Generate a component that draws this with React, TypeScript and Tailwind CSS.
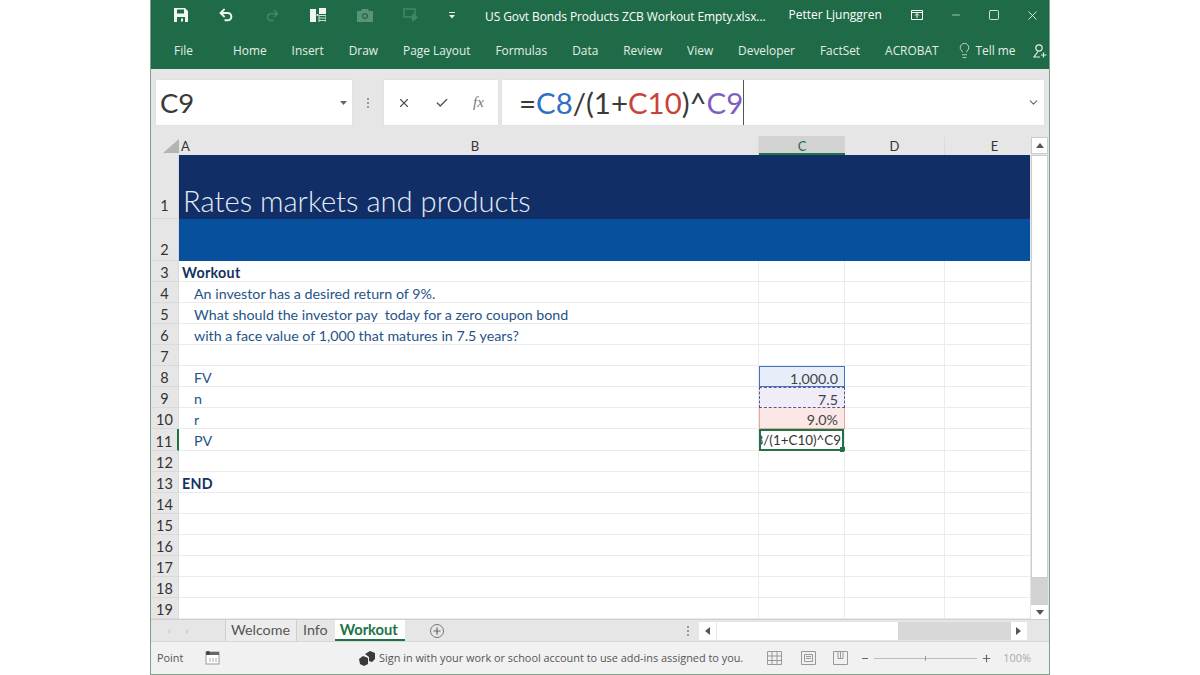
import { Check, ChevronDown, Lightbulb, Plus, Square, Undo2, Redo2, X, Minus } from 'lucide-react';

const ribbonTabs = ['Home', 'Insert', 'Draw', 'Page Layout', 'Formulas', 'Data', 'Review', 'View', 'Developer', 'FactSet', 'ACROBAT'];

type Row = { n: number; h: string; a?: string; indent?: boolean; bold?: boolean; c?: string; cell?: string };

const rows: Row[] = [
    { n: 3, h: 'h-[21px]', a: 'Workout', bold: true },
    { n: 4, h: 'h-[21px]', a: 'An investor has a desired return of 9%.', indent: true },
    { n: 5, h: 'h-[21px]', a: 'What should the investor pay  today for a zero coupon bond', indent: true },
    { n: 6, h: 'h-[21px]', a: 'with a face value of 1,000 that matures in 7.5 years?', indent: true },
    { n: 7, h: 'h-[21px]' },
    { n: 8, h: 'h-[21px]', a: 'FV', indent: true, c: '1,000.0', cell: 'bg-[#e7eefa] border border-[#4472c4]' },
    { n: 9, h: 'h-[21px]', a: 'n', indent: true, c: '7.5', cell: 'bg-[#f1edf8] border border-dashed border-[#5b5b8a]' },
    { n: 10, h: 'h-[21px]', a: 'r', indent: true, c: '9.0%', cell: 'bg-[#fbe8e6] border-x border-b border-[#e0a8a0]' },
    { n: 11, h: 'h-[22px]', a: 'PV', indent: true },
    { n: 12, h: 'h-[21px]' },
    { n: 13, h: 'h-[21px]', a: 'END', bold: true },
    { n: 14, h: 'h-[21px]' },
    { n: 15, h: 'h-[21px]' },
    { n: 16, h: 'h-[21px]' },
    { n: 17, h: 'h-[21px]' },
    { n: 18, h: 'h-[21px]' },
    { n: 19, h: 'h-[21px]' },
];

const RowHead = ({ n, active, pad = '' }: { n: number; active?: boolean; pad?: string }) => (
    <div className={`w-[28px] shrink-0 flex items-end justify-center text-[14.5px] leading-[17px] text-[#333] bg-[#e6e6e6] border-b border-[#dadada] ${pad} ${active ? 'border-r-2 border-r-[#217346]' : 'border-r border-r-[#dadada]'}`}>
        {n}
    </div>
);

const Dots = () => (
    <div className="flex flex-col items-center justify-center gap-[2px]">
        <span className="w-[2px] h-[2px] bg-[#999]" />
        <span className="w-[2px] h-[2px] bg-[#999]" />
        <span className="w-[2px] h-[2px] bg-[#999]" />
    </div>
);

const App = () => {
    return (
        <div className="w-[1200px] h-[675px] bg-white flex justify-center overflow-hidden font-['Lato',sans-serif]">
            <div className="w-[900px] h-[675px] flex flex-col bg-[#e6e6e6] border-x border-[#7f9f8f]">
                {/* title bar */}
                <div className="h-[34px] bg-[#1f6b47] flex items-center text-white font-['Open_Sans',sans-serif] shrink-0">
                    <div className="flex items-center w-[334px] pl-[23px] pb-[4px]">
                        <svg width="14" height="14" viewBox="0 0 14 14">
                            <path fillRule="evenodd" d="M0 0h11l3 3v11H0zM3 1.500v4h7v-4zM3 9v5h8V9z" fill="#f3f7f4" />
                            <rect x="7" y="10.500" width="2" height="3" fill="#f3f7f4" />
                        </svg>
                        <Undo2 size={16} strokeWidth={3} className="ml-[30px] text-[#f3f7f4]" />
                        <Redo2 size={15} strokeWidth={2.4} className="ml-[31px] text-[#3f8a66]" />
                        <svg width="16" height="14" viewBox="0 0 16 14" className="ml-[30px]">
                            <rect x="0" y="1" width="6" height="13" fill="#f3f7f4" />
                            <rect x="6.500" y="6" width="2" height="2" fill="#cfdfd5" />
                            <rect x="9" y="0" width="7" height="6" fill="#f3f7f4" />
                            <path d="M9 7.500h7M9 10h7M9 12.500h7M9 7v7M16 7v7" stroke="#cfdfd5" strokeWidth="1" />
                        </svg>
                        <svg width="16" height="13" viewBox="0 0 16 13" className="ml-[31px]">
                            <path fillRule="evenodd" d="M0 2h4l1-2h6l1 2h4v11H0zM8 4a3 3 0 1 0 0 6 3 3 0 0 0 0-6z" fill="#5b9379" />
                            <circle cx="8" cy="7" r="1.800" fill="#5b9379" />
                        </svg>
                        <svg width="16" height="14" viewBox="0 0 16 14" className="ml-[30px]">
                            <rect x="1" y="1" width="11" height="8" fill="none" stroke="#3f8a66" strokeWidth="1.500" />
                            <path d="M9 5l6 4.500L9 14z" fill="#3f8a66" />
                        </svg>
                        <svg width="6" height="7" viewBox="0 0 6 7" className="ml-[30px]">
                            <path d="M0 0h6v1H0zM0 3h6L3 6.500z" fill="#e6efe9" />
                        </svg>
                    </div>
                    <span className="text-[12px] whitespace-nowrap tracking-[-0.1px]">US Govt Bonds Products ZCB Workout Empty.xlsx...</span>
                    <span className="ml-[23px] text-[12px] whitespace-nowrap pb-[4px]">Petter Ljunggren</span>
                    <svg width="12" height="10" viewBox="0 0 12 10" className="ml-[29px] mb-[4px]">
                        <path d="M.5.500h11v9H.5zM.5 2.500h11M6 8V4M4 5.500l2-2 2 2" fill="none" stroke="#fff" strokeWidth="1" />
                    </svg>
                    <Minus size={12} strokeWidth={1.2} className="ml-[27px] mb-[4px]" />
                    <Square size={12} strokeWidth={1.6} className="ml-[26px] mb-[4px]" />
                    <X size={15} strokeWidth={1.3} className="ml-[25px] mb-[4px]" />
                </div>

                {/* ribbon tabs */}
                <div className="h-[35px] bg-[#1f6b47] flex items-center text-[11.9px] text-[#e4eee8] font-['Open_Sans',sans-serif] shrink-0 pb-[2px]">
                    <span className="ml-[23px] mr-[39px] w-[20px]">File</span>
                    <div className="flex gap-[25px] whitespace-nowrap">
                        {ribbonTabs.map((t) => (
                            <span key={t}>{t}</span>
                        ))}
                    </div>
                    <Lightbulb size={17} strokeWidth={1.1} className="ml-[18px]" />
                    <span className="ml-[2px] whitespace-nowrap">Tell me</span>
                    <svg width="14" height="14" viewBox="0 0 14 14" className="ml-[18px]">
                        <circle cx="6" cy="4" r="3.200" fill="none" stroke="#e4eee8" strokeWidth="1.200" />
                        <path d="M5 7.500L1 13h6M10.500 8.500v5M8 11h5.500" fill="none" stroke="#e4eee8" strokeWidth="1.200" />
                    </svg>
                </div>

                {/* formula bar */}
                <div className="h-[67px] bg-[#e6e6e6] px-[5px] pt-[11px] shrink-0">
                    <div className="h-[45px] flex items-stretch">
                        <div className="w-[196px] bg-white flex items-center pl-[4px] pr-[5px] shadow-[0_0_1px_#ccc]">
                            <span className="text-[27.5px] text-[#3a3a3a] flex-1">C9</span>
                            <svg width="7" height="4" viewBox="0 0 7 4"><path d="M0 0h7L3.500 4z" fill="#666" /></svg>
                        </div>
                        <div className="w-[32px] flex justify-center">
                            <Dots />
                        </div>
                        <div className="w-[114px] bg-white flex items-center pl-[13px] shadow-[0_0_1px_#ccc]">
                            <X size={14} strokeWidth={2} className="text-[#555]" />
                            <Check size={14} strokeWidth={2.4} className="text-[#555] ml-[24px]" />
                            <span className="ml-[24px] text-[15px] italic text-[#777] font-['Liberation_Serif',serif]">fx</span>
                        </div>
                        <div className="w-[542px] ml-[4px] bg-white flex items-center pl-[17px] pr-[4px] shadow-[0_0_1px_#ccc]">
                            <span className="text-[29.4px] text-[#3a3a3a] whitespace-nowrap border-r border-[#555] flex-none leading-[45px]">
                                =<span className="text-[#2f6fc4]">C8</span>/(1+<span className="text-[#c9423a]">C10</span>)^<span className="text-[#7e5fc0]">C9</span>
                            </span>
                            <span className="flex-1" />
                            <ChevronDown size={13} strokeWidth={2} className="text-[#666]" />
                        </div>
                    </div>
                </div>

                {/* sheet */}
                <div className="flex flex-1 min-h-0 bg-white">
                    <div className="w-[879px] flex flex-col text-[14.25px] leading-[19px]">
                        <div className="h-[19px] flex bg-[#e6e6e6] text-[13px] text-[#333] shrink-0 pt-px">
                            <div className="w-[28px] relative shrink-0">
                                <div className="absolute right-0 bottom-[2px] w-0 h-0 border-l-[16px] border-l-transparent border-b-[14px] border-b-[#b4b4b4]" />
                            </div>
                            <div className="w-[13px] pl-[2px] shrink-0">A</div>
                            <div className="w-[567px] text-center border-r border-[#dadada] shrink-0">B</div>
                            <div className="w-[86px] text-center bg-[#d2d2d2] border-b-2 border-[#217346] text-[#1f6b47] shrink-0 -mt-px pt-px">C</div>
                            <div className="w-[100px] text-center border-r border-[#dadada] shrink-0">D</div>
                            <div className="w-[85px] text-center pl-[14px] shrink-0">E</div>
                        </div>
                        <div className="h-[64px] flex shrink-0">
                            <RowHead n={1} pad="pb-[4px]" />
                            <div className="flex-1 bg-[#112f66] text-[#e4ebf5] text-[29.2px] font-light leading-[36px] pl-[4px] pt-[28px]">Rates markets and products</div>
                        </div>
                        <div className="h-[42px] flex shrink-0">
                            <RowHead n={2} pad="pb-[2px]" />
                            <div className="flex-1 bg-[#06509d]" />
                        </div>
                        {rows.map((r) => (
                            <div key={r.n} className={`${r.h} flex shrink-0`}>
                                <RowHead n={r.n} active={r.n === 11} />
                                <div className={`w-[580px] shrink-0 border-b border-r border-[#ebebeb] whitespace-pre pt-[2px] ${r.indent ? 'pl-[15px]' : 'pl-[3px]'} ${r.bold ? 'font-bold text-[#15325f] tracking-[0.3px]' : 'text-[#1f5488]'}`}>
                                    {r.a}
                                </div>
                                <div className={`w-[86px] shrink-0 relative flex items-start justify-end pt-[2px] pr-[6px] text-[#444] ${r.cell ?? 'border-b border-r border-[#ebebeb]'}`}>
                                    {r.c}
                                    {r.n === 11 && (
                                        <>
                                            <div className="absolute inset-x-0 top-0 -bottom-px border-2 border-[#217346] flex items-center justify-end overflow-hidden pt-[1px] pr-[1px] text-[13.4px] text-[#333] whitespace-nowrap">=C8/(1+C10)^C9</div>
                                            <div className="absolute -right-px -bottom-[2px] w-[5px] h-[5px] bg-[#217346]" />
                                        </>
                                    )}
                                </div>
                                <div className="w-[100px] shrink-0 border-b border-r border-[#ebebeb]" />
                                <div className="w-[85px] shrink-0 border-b border-[#ebebeb]" />
                            </div>
                        ))}
                    </div>
                    <div className="w-[19px] bg-[#e6e6e6] flex flex-col items-center shrink-0 pt-px">
                        <div className="w-[17px] h-[17px] bg-white flex items-center justify-center border border-[#ccc]">
                            <svg width="8" height="5" viewBox="0 0 8 5"><path d="M4 0l4 5H0z" fill="#555" /></svg>
                        </div>
                        <div className="w-[17px] h-[423px] bg-white border border-[#ccc] mt-px" />
                        <div className="flex-1 w-[17px] bg-[#d2d2d2]" />
                        <div className="w-[17px] h-[14px] bg-white flex items-center justify-center">
                            <svg width="8" height="5" viewBox="0 0 8 5"><path d="M0 0h8L4 5z" fill="#555" /></svg>
                        </div>
                    </div>
                </div>

                {/* sheet tabs */}
                <div className="h-[22px] bg-[#e6e6e6] flex items-center shrink-0 border-t border-[#cfcfcf]">
                    <div className="w-[74px] flex pl-[17px] gap-[15px] text-[#aaa] text-[9px] shrink-0">
                        <span>‹</span>
                        <span>›</span>
                    </div>
                    <div className="flex h-full text-[14.3px] text-[#555] items-center">
                        <div className="h-full px-[5px] flex items-center border-x border-[#cfcfcf] bg-[#ececec] w-[72px] pb-[2px]">Welcome</div>
                        <div className="h-full pl-[6px] pr-[7px] flex items-center pb-[2px]">Info</div>
                        <div className="h-full w-[70px] px-[5px] flex items-center bg-white font-bold text-[#217346] border-b-2 border-[#217346] text-[14.7px]">Workout</div>
                    </div>
                    <svg width="16" height="16" viewBox="0 0 16 16" className="ml-[24px]">
                        <circle cx="8" cy="8" r="6.500" fill="none" stroke="#777" />
                        <path d="M8 4.500v7M4.500 8h7" stroke="#666" strokeWidth="1.200" />
                    </svg>
                    <div className="ml-[242px]">
                        <Dots />
                    </div>
                    <div className="ml-[10px] h-[18px] w-[17px] bg-white flex items-center justify-center">
                        <svg width="5" height="8" viewBox="0 0 5 8"><path d="M5 0v8L0 4z" fill="#555" /></svg>
                    </div>
                    <div className="ml-px h-[18px] w-[181px] bg-white" />
                    <div className="h-[18px] w-[113px] bg-[#d8d8d8]" />
                    <div className="h-[18px] w-[16px] bg-white flex items-center justify-center">
                        <svg width="5" height="8" viewBox="0 0 5 8"><path d="M0 0v8l5-4z" fill="#555" /></svg>
                    </div>
                </div>

                {/* status bar */}
                <div className="h-[34px] bg-[#f1f1f1] flex items-center text-[10.9px] text-[#555] font-['Open_Sans',sans-serif] shrink-0 border-b border-[#7f9f8f] border-t border-t-[#d8d8d8]">
                    <span className="ml-[6px] w-[48px]">Point</span>
                    <svg width="15" height="14" viewBox="0 0 15 14">
                        <rect x="1" y="1" width="13" height="12" fill="#fff" stroke="#999" />
                        <rect x="1" y="1" width="13" height="3" fill="#666" />
                        <circle cx="3" cy="2" r="2" fill="#444" />
                        <path d="M5 11V7M8 11V7M11 11V7" stroke="#aaa" />
                    </svg>
                    <svg width="16" height="15" viewBox="0 0 16 15" className="ml-[139px]">
                        <path d="M6 3l5-3 5 2v6l-3 3-3-1V6z" fill="#3a3a3a" />
                        <path d="M0 8l4-3 5 2v6l-4 2-4-2z" fill="#3a3a3a" />
                    </svg>
                    <span className="ml-[4px] whitespace-nowrap">Sign in with your work or school account to use add-ins assigned to you.</span>
                    <svg width="15" height="14" viewBox="0 0 15 14" className="ml-[24px]">
                        <path d="M.5.500h14v13H.5zM.5 5h14M.5 9.500h14M5 .500v13M10 .500v13" fill="none" stroke="#999" />
                    </svg>
                    <svg width="15" height="14" viewBox="0 0 15 14" className="ml-[19px]">
                        <path d="M.5.500h14v13H.5z M3.500 3.500h8v7h-8z M5 5.500h5M5 7.500h5" fill="none" stroke="#999" />
                    </svg>
                    <svg width="15" height="14" viewBox="0 0 15 14" className="ml-[17px]">
                        <path d="M.5.500h14v13H.5zM5 .500v7h5v-7M7.500 .500v7" fill="none" stroke="#999" />
                    </svg>
                    <span className="ml-[14px] w-[6px] h-px bg-[#666]" />
                    <div className="w-[103px] h-px bg-[#bbb] relative ml-[6px]">
                        <div className="absolute left-[51px] -top-[2px] w-px h-[5px] bg-[#999]" />
                    </div>
                    <Plus size={11} strokeWidth={2.4} className="ml-[4px] text-[#666]" />
                    <span className="ml-[11px] text-[#aaa]">100%</span>
                </div>
            </div>
        </div>
    );
};

export default App;
